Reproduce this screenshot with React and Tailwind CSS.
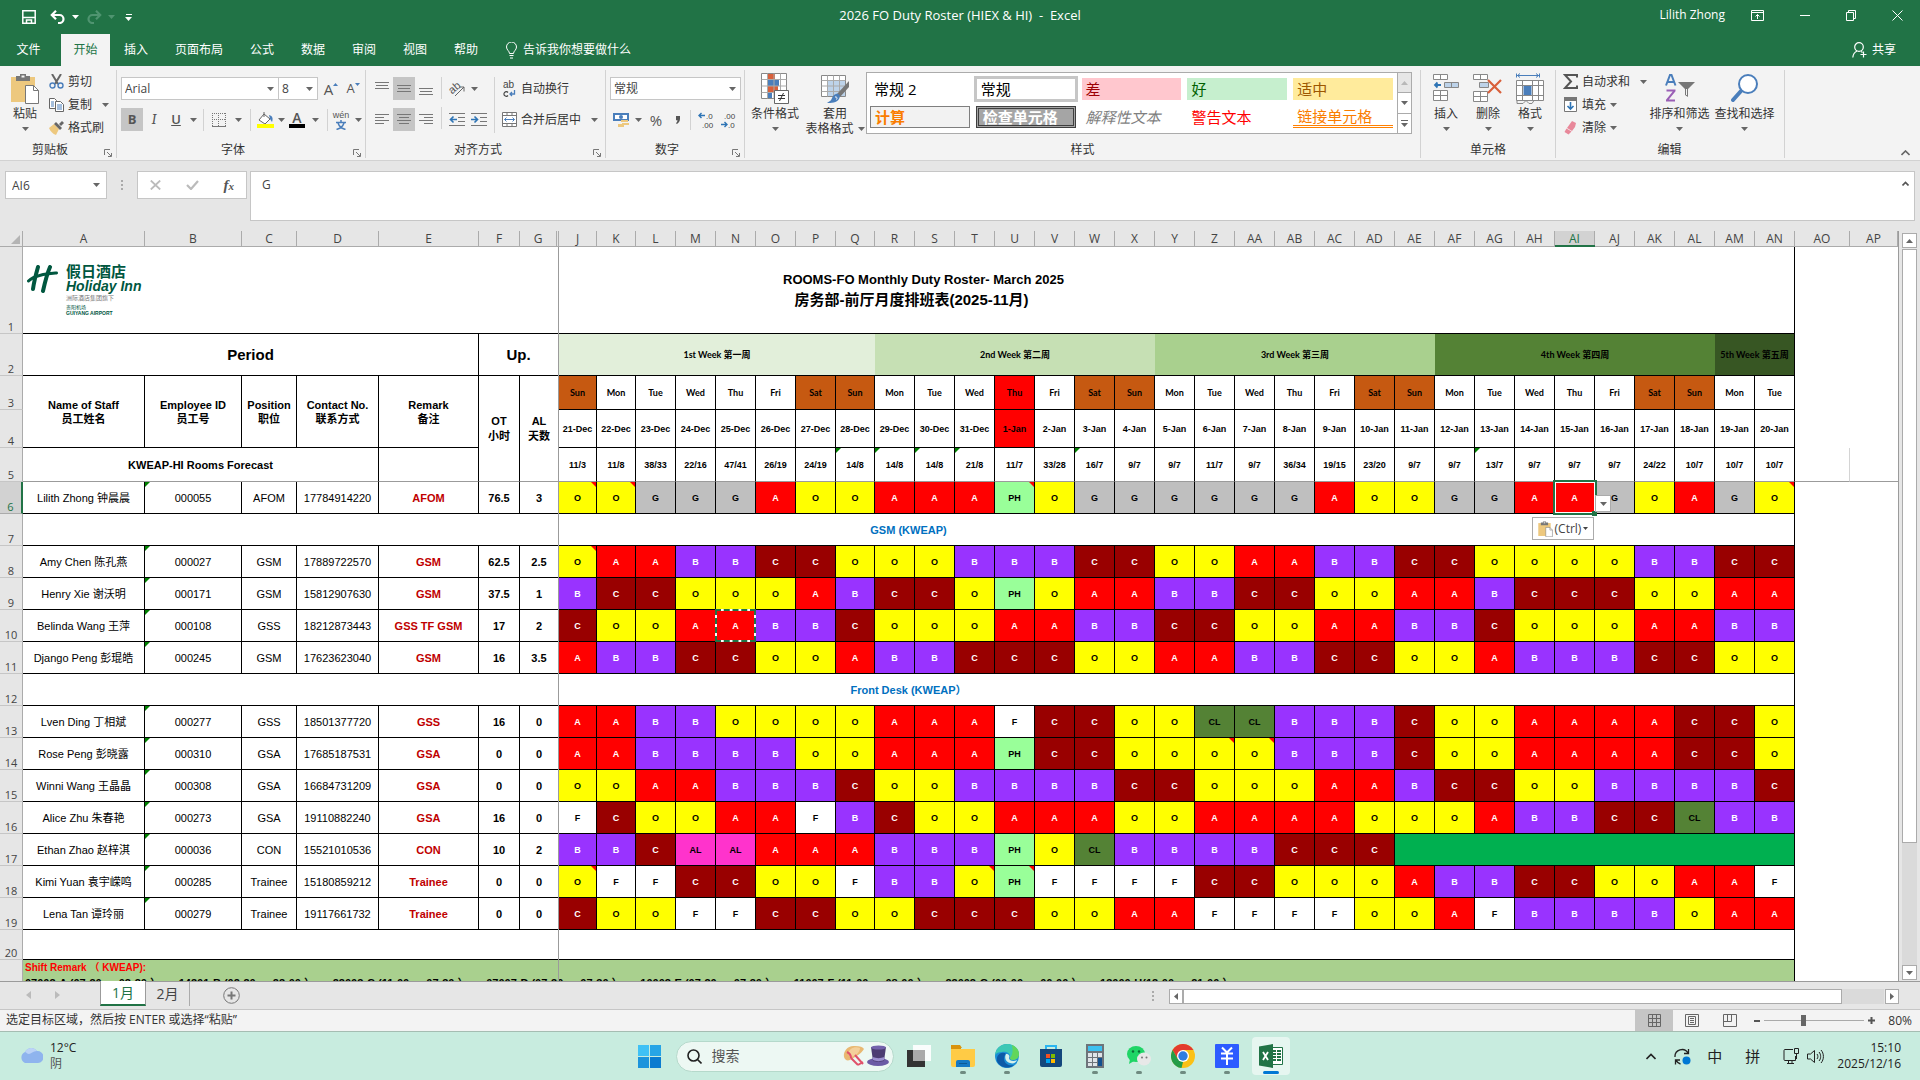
import React from 'react';

const WEEKS = [
  { label: '1st Week 第一周', span: 8, color: 'bg-[#e2efda]' },
  { label: '2nd Week 第二周', span: 7, color: 'bg-[#c6e0b4]' },
  { label: '3rd Week 第三周', span: 7, color: 'bg-[#a9d08e]' },
  { label: '4th Week 第四周', span: 7, color: 'bg-[#548235]' },
  { label: '5th Week 第五周', span: 2, color: 'bg-[#375623]' },
];

const DAY_NAMES = ['Sun', 'Mon', 'Tue', 'Wed', 'Thu', 'Fri', 'Sat'];

const DAYS = Array.from({ length: 31 }, (_, i) => ({
  name: DAY_NAMES[i % 7],
  date: i < 11 ? `${21 + i}-Dec` : `${i - 10}-Jan`,
  holiday: i === 11,
}));

const FORECAST =
  '11/3 11/8 38/33 22/16 47/41 26/19 24/19 14/8 14/8 14/8 21/8 11/7 33/28 16/7 9/7 9/7 11/7 9/7 36/34 19/15 23/20 9/7 9/7 13/7 9/7 9/7 9/7 24/22 10/7 10/7 10/7'.split(' ');
const FORECAST_FLAGS = [7, 8, 9, 10, 13, 23];

const SHIFT_STYLES = {
  A: 'bg-[#ff0000] text-white',
  B: 'bg-[#9933ff] text-white',
  C: 'bg-[#990000] text-white',
  O: 'bg-[#ffff00] text-black',
  G: 'bg-[#bfbfbf] text-black',
  F: 'bg-white text-black',
  PH: 'bg-[#99ff99] text-black',
  AL: 'bg-[#ff33cc] text-black',
  CL: 'bg-[#548235] text-black',
};

const ROWS = [
  { n: 6, name: 'Lilith Zhong 钟晨晨', id: '000055', pos: 'AFOM', tel: '17784914220', remark: 'AFOM', ot: '76.5', al: '3', notes: [0, 1, 11, 30], shifts: 'O O G G G A O O A A A PH O G G G G G G A O O G G A A G O A G O' },
  { n: 7, section: 'GSM (KWEAP)' },
  { n: 8, name: 'Amy Chen 陈孔燕', id: '000027', pos: 'GSM', tel: '17889722570', remark: 'GSM', ot: '62.5', al: '2.5', notes: [0], shifts: 'O A A B B C C O O O B B B C C O O A A B B C C O O O O B B C C' },
  { n: 9, name: 'Henry Xie 谢沃明', id: '000171', pos: 'GSM', tel: '15812907630', remark: 'GSM', ot: '37.5', al: '1', shifts: 'B C C O O O A B C C O PH O A A B B C C O O A A B C C C O O A A' },
  { n: 10, name: 'Belinda Wang 王萍', id: '000108', pos: 'GSS', tel: '18212873443', remark: 'GSS TF GSM', ot: '17', al: '2', shifts: 'C O O A A B B C O O O A A B B C C O O A A B B C O O O A A B B' },
  { n: 11, name: 'Django Peng 彭琨皓', id: '000245', pos: 'GSM', tel: '17623623040', remark: 'GSM', ot: '16', al: '3.5', shifts: 'A B B C C O O A B B C C C O O A A B B C C O O A B B B C C O O' },
  { n: 12, section: 'Front Desk (KWEAP）' },
  { n: 13, name: 'Lven Ding 丁相斌', id: '000277', pos: 'GSS', tel: '18501377720', remark: 'GSS', ot: '16', al: '0', shifts: 'A A B B O O O O A A A F C C O O CL CL B B B C O O A A A A C C O' },
  { n: 14, name: 'Rose Peng 彭晓露', id: '000310', pos: 'GSA', tel: '17685187531', remark: 'GSA', ot: '0', al: '0', notes: [16, 17], shifts: 'A A B B B B O O A A A PH C C O O O O B B B C O O A A A A C C O' },
  { n: 15, name: 'Winni Wang 王晶晶', id: '000308', pos: 'GSA', tel: '16684731209', remark: 'GSA', ot: '0', al: '0', shifts: 'O O A A B B B C O O B B B B C C O O O A A B C C O O B B B B C' },
  { n: 16, name: 'Alice Zhu 朱春艳', id: '000273', pos: 'GSA', tel: '19110882240', remark: 'GSA', ot: '16', al: '0', shifts: 'F C O O A A F B C O O A A A O O A A A A O O O A B B C C CL B B' },
  { n: 17, name: 'Ethan Zhao 赵梓淇', id: '000036', pos: 'CON', tel: '15521010536', remark: 'CON', ot: '10', al: '2', shifts: 'B B C AL AL A A A B B B PH O CL B B B B C C C', rest: 10 },
  { n: 18, name: 'Kimi Yuan 袁宇嵘鸣', id: '000285', pos: 'Trainee', tel: '15180859212', remark: 'Trainee', ot: '0', al: '0', notes: [0, 10, 11], shifts: 'O F F C C O O F B B O PH F F F F C C O O O A B B C C O O A A F' },
  { n: 19, name: 'Lena Tan 谭玲丽', id: '000279', pos: 'Trainee', tel: '19117661732', remark: 'Trainee', ot: '0', al: '0', shifts: 'C O O F F C C O O C C C O O A A F F F F O O A F B B B B O A A' },
];

const SHIFT_TIMES = [
  '07003-A (07:30 — 03:30 ）、',
  '14301-B (02:30 — 23:00 ）、',
  '23003-C (11:00 — 07:30 ）、',
  '07007-D (07:30 — 07:30 ）、',
  '10003-E (07:30 — 07:30 ）、',
  '11007-F (11:00 — 08:00 ）、',
  '23003-G (00:00 — 06:00 ）、',
  '13000-H(13:00 — 21:00 ）',
];

const COLUMNS = [
  ['A', 'w-[122px]'], ['B', 'w-[97px]'], ['C', 'w-[55px]'], ['D', 'w-[82px]'], ['E', 'w-[100px]'],
  ['F', 'w-[41px]'], ['G', 'w-[39px]'], ['J', 'w-[38px]'], ['K', 'w-[39px]'],
  ...['L', 'M', 'N', 'O', 'P'].map((c) => [c, 'w-[40px]']),
  ['Q', 'w-[39px]'],
  ...['R', 'S', 'T', 'U', 'V', 'W', 'X', 'Y', 'Z', 'AA', 'AB', 'AC', 'AD', 'AE', 'AF', 'AG', 'AH', 'AI', 'AJ', 'AK', 'AL', 'AM', 'AN'].map((c) => [c, 'w-[40px]']),
  ['AO', 'w-[55px]'], ['AP', ''],
];

const CELL = 'relative p-0 border-r border-b border-black text-center';

/* ---------- small shared pieces ---------- */

const Caret = ({ className = 'text-[#666]' }) => (
  <svg width="7" height="4" viewBox="0 0 7 4" className={`shrink-0 ${className}`}>
    <path d="M0 0h7L3.5 4z" fill="currentColor" />
  </svg>
);

const VLine = ({ className = 'h-[22px]' }) => <span className={`w-px shrink-0 bg-[#d2d2d2] ${className}`} />;

const IconButton = ({ label, active, className = 'w-[22px]', children }) => (
  <button
    type="button"
    aria-label={label}
    className={`h-[23px] shrink-0 flex items-center justify-center ${className} ${active ? 'bg-[#c5c5c5]' : ''}`}
  >
    {children}
  </button>
);

const CaretButton = ({ label, className = 'w-3' }) => (
  <button type="button" aria-label={label} className={`h-[23px] shrink-0 flex items-center justify-center ${className}`}>
    <Caret />
  </button>
);

const Combo = ({ label, value, className }) => (
  <span className={`relative h-[23px] flex items-center border border-[#c6c6c6] bg-white ${className}`}>
    <select aria-label={label} defaultValue={value} className="w-full h-full appearance-none bg-transparent pl-[3px] text-xs text-[#444] outline-none">
      <option>{value}</option>
    </select>
    <span className="pointer-events-none absolute right-1 flex"><Caret /></span>
  </span>
);

const Group = ({ title, launcher, className, children }) => (
  <section className={`flex flex-col border-r border-[#d2d2d2] h-[88px] ${className}`}>
    <div className="flex-1 min-h-0">{children}</div>
    <div className={`relative h-4 flex items-center justify-center leading-4 text-[#333] ${launcher ? 'pr-5' : ''}`}>
      {title}
      {launcher && (
        <button type="button" aria-label={`${title}设置`} className="absolute right-1 bottom-px">
          <svg width="8" height="8" viewBox="0 0 8 8" fill="none" stroke="#777">
            <path d="M.5 6V.5H6M3 3l4 4M7.5 4v3.500H4" />
          </svg>
        </button>
      )}
    </div>
  </section>
);

const BigButton = ({ icon, lines, inlineCaret, className }) => (
  <button type="button" className={`flex flex-col items-center shrink-0 whitespace-nowrap ${className}`}>
    <span className="h-[36px] flex items-center">{icon}</span>
    <span className="leading-[15px] h-[15px]">{lines[0]}</span>
    <span className="leading-[15px] h-[15px] flex items-center gap-1">
      {lines[1]}
      {(inlineCaret || !lines[1]) && <Caret />}
    </span>
  </button>
);

const Clipboard = ({ width, height }) => (
  <svg width={width} height={height} viewBox="0 0 28 31">
    <path d="M0 4h24v25H0z" fill="#edc87e" />
    <path d="M5 8V3h4V1h6v2h4v5z" fill="#777" />
    <path d="M10.500 2.500h3v2h-3z" fill="#f3f3f3" />
    <path d="M14.500 12.500h8l5 5v13h-13z" fill="#fff" stroke="#777" />
    <path d="M22.500 12.500v5h5" fill="none" stroke="#777" />
  </svg>
);

const Lines = ({ rows }) => (
  <svg width="14" height="13" viewBox="0 0 14 13" stroke="#777">
    {rows.map(([y, x, w]) => <path key={y} d={`M${x} ${y + 0.5}h${w}`} />)}
  </svg>
);

const Indent = ({ back }) => (
  <svg width="16" height="13" viewBox="0 0 16 13" fill="none">
    <path d="M0 .5h16M9 4.500h7M9 8.500h7M0 12.500h16" stroke="#777" />
    <path d={back ? 'M8 6.500H2M4.500 3.500l-3 3 3 3' : 'M0 6.500h6M3.500 3.500l3 3-3 3'} stroke="#2e74b5" strokeWidth="1.6" />
  </svg>
);

/* ---------- title bar and tabs ---------- */

const TitleBar = () => (
  <header className="bg-[#217346] text-white h-[34px] grid grid-cols-[1fr_auto_1fr] items-center shrink-0">
    <div className="flex items-center pl-[22px]">
      <button type="button" aria-label="保存">
        <svg width="14" height="14" viewBox="0 0 14 14" fill="none" stroke="#fff" strokeWidth="1.500">
          <path d="M.8.800h12.400v12.400H.8zM.8 7.500h12.400M4.500 13v-3h5v3" />
        </svg>
      </button>
      <button type="button" aria-label="撤消" className="ml-[14px] flex items-center gap-[6px]">
        <svg width="16" height="14" viewBox="0 0 16 14" fill="none" stroke="#fff" strokeWidth="2.200">
          <path d="M6 .8L1.800 5 6 9.200M2 5h7.500a4 4 0 0 1 0 8H8" />
        </svg>
        <Caret className="text-white" />
      </button>
      <button type="button" aria-label="恢复" className="ml-[7px] flex items-center gap-[6px]">
        <svg width="16" height="14" viewBox="0 0 16 14" fill="none" stroke="#4f9470" strokeWidth="2.200">
          <path d="M10 .8L14.200 5 10 9.200M14 5H6.500a4 4 0 0 0 0 8H8" />
        </svg>
        <Caret className="text-[#4f9470]" />
      </button>
      <button type="button" aria-label="自定义快速访问工具栏" className="ml-[10px] flex flex-col items-center gap-[2px]">
        <span className="w-[6px] h-px bg-white" />
        <Caret className="text-white" />
      </button>
    </div>
    <h1 className="text-[13px] leading-4 whitespace-pre pb-1">2026 FO Duty Roster (HIEX &amp; HI)  -  Excel</h1>
    <div className="flex items-center justify-end pb-1 pr-[17px]">
      <span className="text-xs mr-[26px]">Lilith Zhong</span>
      <button type="button" aria-label="功能区显示选项" className="mr-9">
        <svg width="13" height="11" viewBox="0 0 13 11" fill="none" stroke="#fff">
          <path d="M.5.500h12v10H.5zM.5 2.500h12M6.500 9V4.500M4.500 6.500l2-2 2 2" />
        </svg>
      </button>
      <button type="button" aria-label="最小化" className="mr-9">
        <svg width="10" height="11" viewBox="0 0 10 11" stroke="#fff"><path d="M0 5.500h10" /></svg>
      </button>
      <button type="button" aria-label="还原" className="mr-9">
        <svg width="10" height="11" viewBox="0 0 10 11" fill="none" stroke="#fff">
          <path d="M.5 2.500h7v8h-7zM2.500 2.500v-2h7v8h-2" />
        </svg>
      </button>
      <button type="button" aria-label="关闭">
        <svg width="11" height="11" viewBox="0 0 11 11" stroke="#fff"><path d="M.5.500l10 10M10.500.500l-10 10" /></svg>
      </button>
    </div>
  </header>
);

const TabBar = () => (
  <nav className="bg-[#217346] text-white h-8 flex items-stretch text-xs shrink-0">
    <button type="button" className="w-[61px] pr-1 shrink-0">文件</button>
    <button type="button" className="bg-[#f3f3f3] text-[#217346] w-[49px] shrink-0">开始</button>
    <div className="flex gap-px">
      {['插入', '页面布局', '公式', '数据', '审阅', '视图', '帮助'].map((tab) => (
        <button key={tab} type="button" className="pl-[14px] pr-3 whitespace-nowrap">{tab}</button>
      ))}
    </div>
    <button type="button" className="flex items-center gap-[6px] ml-4 whitespace-nowrap">
      <svg width="11" height="17" viewBox="0 0 11 17" fill="none" stroke="#fff">
        <path d="M3.500 11.500c0-2.500-3-3.500-3-6.500a5 5 0 0 1 10 0c0 3-3 4-3 6.500zM3.500 13.500h4M4 16h3" />
      </svg>
      告诉我你想要做什么
    </button>
    <button type="button" className="flex items-center gap-[5px] ml-auto pr-6">
      <svg width="15" height="16" viewBox="0 0 15 16" fill="none" stroke="#fff" strokeWidth="1.200">
        <circle cx="7" cy="5" r="4.300" />
        <path d="M.8 15.500c.3-3.500 2-5.500 4.200-6.500M9 9.500l1.500 1M11.500 9.500v6M8.500 12.500h6" />
      </svg>
      共享
    </button>
  </nav>
);

/* ---------- ribbon ---------- */

const ClipboardGroup = () => (
  <Group title="剪贴板" launcher className="w-[117px] pl-1">
    <div className="flex">
      <BigButton className="w-[42px]" icon={<Clipboard width={28} height={31} />} lines={['粘贴']} />
      <div className="flex flex-col pl-[3px]">
        <button type="button" className="h-[23px] flex items-center gap-1">
          <svg width="15" height="15" viewBox="0 0 15 15" fill="none">
            <path d="M3 0l6 10M12 0L6 10" stroke="#666" strokeWidth="2" />
            <circle cx="3.500" cy="11.500" r="2.500" stroke="#4a7ebb" strokeWidth="1.400" />
            <circle cx="11.500" cy="11.500" r="2.500" stroke="#4a7ebb" strokeWidth="1.400" />
          </svg>
          剪切
        </button>
        <button type="button" className="h-[23px] flex items-center gap-1">
          <svg width="15" height="14" viewBox="0 0 15 14" fill="#fff" stroke="#666">
            <path d="M.5.500h5l2 2v8h-7z" />
            <path d="M2 4h3M2 6h3M2 8h3" stroke="#4a7ebb" />
            <path d="M6.500 3.500h5l3 3v7h-8z" />
            <path d="M8 7h5M8 9h5M8 11h5" stroke="#4a7ebb" />
          </svg>
          复制
          <span className="pl-[6px]"><Caret /></span>
        </button>
        <button type="button" className="h-[23px] flex items-center gap-1">
          <svg width="15" height="14" viewBox="0 0 15 14">
            <path d="M0 7l5-4 5 5-3 6c-3-1-6-4-7-7z" fill="#edc87e" />
            <path d="M5 3l2-2 6 6-2 2z" fill="#666" />
            <path d="M10 3l3-3 2 2-3 3z" fill="#666" />
          </svg>
          格式刷
        </button>
      </div>
    </div>
  </Group>
);

const FontGroup = () => (
  <Group title="字体" launcher className="w-[249px] pl-1">
    <div className="flex flex-col gap-2 pt-[7px]">
      <div className="flex items-center">
        <Combo label="字体" value="Arial" className="w-[158px]" />
        <Combo label="字号" value="8" className="w-[40px] -ml-px" />
        <IconButton label="增大字号" className="w-[22px] ml-[2px] text-[15px] text-[#555]">
          A<svg width="5" height="14" viewBox="0 0 5 14"><path d="M0 4l2.500-3L5 4z" fill="#4a7ebb" /></svg>
        </IconButton>
        <IconButton label="减小字号" className="w-[22px] text-[13px] text-[#555]">
          A<svg width="5" height="14" viewBox="0 0 5 14"><path d="M0 1l2.500 3L5 1z" fill="#4a7ebb" /></svg>
        </IconButton>
      </div>
      <div className="flex items-center">
        <IconButton label="加粗" active><b className="text-[13px] text-[#555]">B</b></IconButton>
        <IconButton label="倾斜"><i className="font-serif text-[15px] text-[#555]">I</i></IconButton>
        <IconButton label="下划线"><u className="text-[13px] font-semibold text-[#555]">U</u></IconButton>
        <CaretButton label="下划线样式" />
        <VLine className="h-[22px] mx-1" />
        <IconButton label="边框" className="w-[22px]">
          <svg width="14" height="14" viewBox="0 0 14 14" fill="none" stroke="#777">
            <path d="M.5 0v13M6.500 0v13M13.500 0v13M0 .5h14M0 6.500h14" strokeDasharray="1 1" />
            <path d="M0 13.500h14" />
          </svg>
        </IconButton>
        <CaretButton label="边框选项" className="w-4" />
        <VLine className="h-[22px] mx-1" />
        <IconButton label="填充颜色" className="w-[20px]">
          <svg width="17" height="17" viewBox="0 0 17 17" fill="none">
            <path d="M7 3l6 5-5 5-6-4z" fill="#fff" stroke="#666" />
            <path d="M7 6V1" stroke="#666" />
            <path d="M12 4c4 1 4 4 3 7l-2-3z" fill="#4a7ebb" />
            <path d="M0 13h17v4H0z" fill="#ff0" />
          </svg>
        </IconButton>
        <CaretButton label="填充颜色选项" />
        <IconButton label="字体颜色" className="w-[20px]">
          <span className="flex flex-col items-center">
            <span className="text-[14px] leading-[13px] font-semibold text-[#555]">A</span>
            <span className="w-4 h-1 bg-black" />
          </span>
        </IconButton>
        <CaretButton label="字体颜色选项" className="w-4" />
        <VLine className="h-[22px] mx-1" />
        <IconButton label="拼音" className="w-[18px]">
          <span className="flex flex-col items-center text-[#555]">
            <span className="text-[9px] leading-[10px] font-['Liberation_Sans',sans-serif]">wén</span>
            <svg width="10" height="10" viewBox="0 0 10 10" fill="none" stroke="#4a7ebb" strokeWidth="1.500">
              <path d="M5 0v2M0 2.500h10M2 3c1 3 4 5.500 7.500 6.500M8 3C7 6 4 8.500.5 9.500" />
            </svg>
          </span>
        </IconButton>
        <CaretButton label="拼音选项" className="w-4" />
      </div>
    </div>
  </Group>
);

const AlignGroup = () => (
  <Group title="对齐方式" launcher className="w-[240px] pl-[5px]">
    <div className="flex pt-[7px]">
      <div className="flex flex-col gap-2">
        <div className="flex">
          <IconButton label="顶端对齐"><Lines rows={[[0, 0, 14], [3, 1, 12], [6, 0, 14]]} /></IconButton>
          <IconButton label="垂直居中" active><Lines rows={[[3, 0, 14], [6, 1, 12], [9, 0, 14]]} /></IconButton>
          <IconButton label="底端对齐"><Lines rows={[[6, 0, 14], [9, 1, 12], [12, 0, 14]]} /></IconButton>
        </div>
        <div className="flex">
          <IconButton label="左对齐"><Lines rows={[[1, 0, 14], [4, 0, 9], [7, 0, 14], [10, 0, 9]]} /></IconButton>
          <IconButton label="居中" active><Lines rows={[[1, 0, 14], [4, 2, 10], [7, 0, 14], [10, 2, 10]]} /></IconButton>
          <IconButton label="右对齐"><Lines rows={[[1, 0, 14], [4, 5, 9], [7, 0, 14], [10, 5, 9]]} /></IconButton>
        </div>
      </div>
      <div className="flex flex-col gap-2 px-1">
        <VLine /><VLine />
      </div>
      <div className="flex flex-col gap-2 w-[48px]">
        <div className="flex">
          <IconButton label="方向">
            <svg width="17" height="15" viewBox="0 0 17 15" fill="none" stroke="#666" className="overflow-visible font-['Liberation_Sans',sans-serif]">
              <path d="M6 15l9-9M10.500 6h4.500v4.500" />
              <text x="0" y="11" fontSize="11" fill="#555" stroke="none" transform="rotate(-40 5 8)">ab</text>
            </svg>
          </IconButton>
          <CaretButton label="方向选项" />
        </div>
        <div className="flex">
          <IconButton label="减少缩进量"><Indent back /></IconButton>
          <IconButton label="增加缩进量"><Indent /></IconButton>
        </div>
      </div>
      <VLine className="h-[56px]" />
      <div className="flex flex-col gap-2 pl-[7px]">
        <button type="button" className="h-[23px] flex items-center gap-1">
          <svg width="15" height="18" viewBox="0 0 15 18" className="overflow-visible font-['Liberation_Sans',sans-serif]">
            <text x="1" y="8" fontSize="10" fill="#444">ab</text>
            <path d="M6 12.500a2.300 2.300 0 1 0 0 3" fill="none" stroke="#444" strokeWidth="1.200" />
            <path d="M12.500 10v4H8M10 12l-2 2 2 2" fill="none" stroke="#4a7ebb" strokeWidth="1.300" />
          </svg>
          自动换行
        </button>
        <button type="button" className="h-[23px] flex items-center gap-1">
          <svg width="15" height="15" viewBox="0 0 15 15" fill="#fff" stroke="#777">
            <path d="M.5.500h14v14H.5zM.5 3.500h14M.5 11.500h14M5 .5v3M10 .5v3M5 11.500v3M10 11.500v3" />
            <path d="M2.500 7.500h10M4.500 5.500l-2 2 2 2M10.500 5.500l2 2-2 2" fill="none" stroke="#4a7ebb" />
          </svg>
          合并后居中
          <span className="pl-[6px]"><Caret /></span>
        </button>
      </div>
    </div>
  </Group>
);

const NumberGroup = () => (
  <Group title="数字" launcher className="w-[139px] pl-1">
    <div className="flex flex-col gap-2 pt-[7px]">
      <Combo label="数字格式" value="常规" className="w-[131px]" />
      <div className="flex items-center">
        <IconButton label="会计数字格式">
          <svg width="16" height="16" viewBox="0 0 16 16">
            <path d="M0 1h16v8H0z" fill="#4a7ebb" />
            <path d="M2 3h12v4H2z" fill="#fff" />
            <circle cx="8" cy="5" r="2" fill="#4a7ebb" />
            <path d="M8 8h7v2H8zM9 11h7v2H9zM5 12h6v3H5z" fill="#edc87e" />
          </svg>
        </IconButton>
        <CaretButton label="会计格式选项" />
        <IconButton label="百分比样式" className="w-6 text-[15px] text-[#555]">%</IconButton>
        <IconButton label="千位分隔样式" className="w-[18px]">
          <svg width="5" height="8" viewBox="0 0 5 8"><path d="M1 0h4v3c0 2-1.500 4-3 5l-1-.8c1-1 1.500-2 1.500-3H1z" fill="#555" /></svg>
        </IconButton>
        <VLine className="h-[20px] mx-1" />
        <IconButton label="增加小数位数">
          <svg width="16" height="18" viewBox="0 0 16 18" fontSize="8" fill="#444" className="font-['Liberation_Sans',sans-serif] overflow-visible">
            <path d="M7 4.500H1.500M3.500 2l-2.500 2.500L3.500 7" fill="none" stroke="#2e74b5" strokeWidth="1.400" />
            <text x="8" y="8">.0</text><text x="4" y="17">.00</text>
          </svg>
        </IconButton>
        <IconButton label="减少小数位数">
          <svg width="16" height="18" viewBox="0 0 16 18" fontSize="8" fill="#444" className="font-['Liberation_Sans',sans-serif] overflow-visible">
            <text x="4" y="8">.00</text><text x="8" y="17">.0</text>
            <path d="M1 13.500h5.500M4.500 11l2.500 2.500L4.500 16" fill="none" stroke="#2e74b5" strokeWidth="1.400" />
          </svg>
        </IconButton>
      </div>
    </div>
  </Group>
);

const ConditionalIcon = () => (
  <svg width="30" height="31" viewBox="0 0 30 31" fill="none" stroke="#888">
    <path d="M1.500.500h25v25h-25z" fill="#fff" />
    <path d="M8 1h7v6H8zM8 13h10v6H8z" fill="#d9603b" stroke="none" />
    <path d="M8 7h11v6H8zM8 19h4v6H8z" fill="#4a7ebb" stroke="none" />
    <path d="M1.500 6.500h25M1.500 13h25M1.500 19.500h25M7.500.500v25M14 .5v25M20.500.500v25" stroke="#aaa" />
    <path d="M14.500 17.500h14v13h-14z" fill="#fff" stroke="#666" />
    <path d="M18 22.500h7M18 25.500h7M23.500 20l-4 8" stroke="#333" />
  </svg>
);

const TableFormatIcon = () => (
  <svg width="30" height="31" viewBox="0 0 30 31" fill="none">
    <path d="M1.500 2.500h24v21h-24z" fill="#fff" stroke="#888" />
    <path d="M7 8h18v15H7z" fill="#bdd3ea" />
    <path d="M1.500 7.500h24M1.500 13h24M1.500 18.500h24M7.500 2.500v21M13.500 2.500v21M19.500 2.500v21" stroke="#aaa" />
    <path d="M29 8v6L20 24l-3-3z" fill="#777" />
    <path d="M16 21c3-1 5 2 3 5-2 4-8 4-12 4 3-2 4-2 5-5 1-2 2-3.500 4-4z" fill="#4a7ebb" />
    <path d="M15 24c2-.5 2.500 1 1.500 2.500" stroke="#fff" />
  </svg>
);

const STYLE_CHIPS = [
  ['常规 2', 'text-black whitespace-pre'],
  ['常规', 'text-black bg-white border border-[#c6c6c6] outline-2 outline-[#c6c6c6]'],
  ['差', 'bg-[#ffc7ce] text-[#9c0006]'],
  ['好', 'bg-[#c6efce] text-[#006100]'],
  ['适中', 'bg-[#ffeb9c] text-[#9c5700]'],
  ['计算', 'bg-[#f2f2f2] text-[#fa7d00] font-bold border border-[#7f7f7f]'],
  ['检查单元格', 'bg-[#a5a5a5] text-white font-bold border-[3px] border-double border-[#3f3f3f]'],
  ['解释性文本', 'text-[#7f7f7f] italic'],
  ['警告文本', 'text-[#ff0000]'],
  ['链接单元格', 'text-[#fa7d00] border-b-[3px] border-double border-[#ff8001]'],
];

const StylesGroup = () => (
  <Group title="样式" className="flex-1 min-w-[675px]">
    <div className="flex">
      <BigButton className="w-[60px]" icon={<ConditionalIcon />} lines={['条件格式']} />
      <BigButton className="w-[60px]" icon={<TableFormatIcon />} lines={['套用', '表格格式']} inlineCaret />
      <div className="flex-1 ml-px mt-[2px] mr-2 h-[62px] flex border border-[#ababab] bg-white">
        <div className="flex-1 grid grid-cols-5 gap-x-[6px] gap-y-[6px] pl-[3px] pr-1 py-[5px] text-[15px] leading-4">
          {STYLE_CHIPS.map(([text, style]) => (
            <button key={text} type="button" className={`h-[22px] px-1 flex items-center text-left whitespace-nowrap ${style}`}>{text}</button>
          ))}
        </div>
        <div className="w-[14px] flex flex-col border-l border-[#ababab]">
          <button type="button" aria-label="上一行" className="flex-1 flex items-center justify-center bg-[#e6e6e6]">
            <Caret className="text-[#b8b8b8] rotate-180" />
          </button>
          <button type="button" aria-label="下一行" className="flex-1 flex items-center justify-center border-y border-[#ababab]"><Caret /></button>
          <button type="button" aria-label="其他样式" className="flex-1 flex flex-col items-center justify-center gap-[2px]">
            <span className="w-[7px] h-px bg-[#666]" />
            <Caret />
          </button>
        </div>
      </div>
    </div>
  </Group>
);

const InsertIcon = () => (
  <svg width="28" height="28" viewBox="0 0 28 28" fill="#fff" stroke="#888">
    <path d="M1.500.500h14v5h-14zM8.500.500v5M1.500 16.500h14v10h-14zM8.500 16.500v10M1.500 21.500h14" />
    <path d="M12.500 8.500h14v5h-14zM19.500 8.500v5" fill="#bdd3ea" />
    <path d="M9 11H3M5.500 8.500L3 11l2.500 2.500" fill="none" stroke="#2e74b5" strokeWidth="1.800" />
  </svg>
);

const DeleteIcon = () => (
  <svg width="30" height="28" viewBox="0 0 30 28" fill="#fff" stroke="#888">
    <path d="M.5.500h14v5h-14zM7.500.500v5M.5 17.500h14v10h-14zM7.500 17.500v10M.5 22.500h14" />
    <path d="M6.500 8.500h9v5h-9z" fill="#bdd3ea" />
    <path d="M15 6l13 13M28 6L15 19" fill="none" stroke="#d9603b" strokeWidth="2.200" />
  </svg>
);

const FormatIcon = () => (
  <svg width="28" height="31" viewBox="0 0 28 31" fill="none" stroke="#888">
    <path d="M.5.500v4M23.500.500v4M1 2.500h22M4 .5l-2.500 2L4 4.500M20 .5l2.500 2-2.500 2" stroke="#4a7ebb" />
    <path d="M.5 7.500h27v20H.5z" fill="#fff" />
    <path d="M7.500 12.500h8v10h-8z" fill="#4a7ebb" stroke="none" />
    <path d="M.5 12.500h27M.5 22.500h27M6.500 7.500v20M16.500 7.500v20M22.500 7.500v20" />
    <path d="M1 27.500v3h6l3-3 3 3h3l2-3" />
  </svg>
);

const CellsGroup = () => (
  <Group title="单元格" className="w-[135px]">
    <div className="flex pl-1">
      <BigButton className="w-[42px]" icon={<InsertIcon />} lines={['插入']} />
      <BigButton className="w-[42px]" icon={<DeleteIcon />} lines={['删除']} />
      <BigButton className="w-[42px]" icon={<FormatIcon />} lines={['格式']} />
    </div>
  </Group>
);

const SortIcon = () => (
  <svg width="30" height="30" viewBox="0 0 30 30" fill="none">
    <path d="M1 12.500L5 2h1.500l4 10.500M2.500 9h6.500" stroke="#4a7ebb" strokeWidth="2" />
    <path d="M1.500 17.500h8v.5l-7.500 9v.5h8" stroke="#9a5fb5" strokeWidth="2" />
    <path d="M13 9h17l-7 7v8l-3-2v-6z" fill="#777" />
    <path d="M21 16h1v6h-1z" fill="#f3f3f3" />
  </svg>
);

const FindIcon = () => (
  <svg width="28" height="28" viewBox="0 0 28 28" fill="none">
    <path d="M10 17L2 26" stroke="#4a7ebb" strokeWidth="4" strokeLinecap="round" />
    <circle cx="17" cy="10" r="9" fill="#fff" stroke="#4a7ebb" strokeWidth="2" />
  </svg>
);

const EditingGroup = () => (
  <Group title="编辑" className="w-[229px] pl-[7px] pr-2">
    <div className="flex">
      <div className="w-[87px]">
        <button type="button" className="h-[23px] flex items-center gap-1 whitespace-nowrap">
          <svg width="15" height="15" viewBox="0 0 15 15" fill="none" stroke="#555" strokeWidth="2">
            <path d="M14 3.500V1H2l6 6.500L2 14h12v-2.500" />
          </svg>
          自动求和
          <span className="pl-[6px]"><Caret /></span>
        </button>
        <button type="button" className="h-[23px] flex items-center gap-1">
          <svg width="15" height="15" viewBox="0 0 15 15" fill="none">
            <path d="M1.500.500h12v14h-12z" fill="#fff" stroke="#777" />
            <path d="M1 0h13v4H1z" fill="#777" />
            <path d="M7.500 5v7M4.500 9l3 3 3-3" stroke="#2e74b5" strokeWidth="1.600" />
          </svg>
          填充 <Caret />
        </button>
        <button type="button" className="h-[23px] flex items-center gap-1">
          <svg width="15" height="14" viewBox="0 0 15 14">
            <path d="M9 0l4 2-1 4-3 4-5-3z" fill="#e8889a" />
            <path d="M3.500 7.500l5 3-3 3-4-2.500z" fill="#e8889a" />
          </svg>
          清除 <Caret />
        </button>
      </div>
      <BigButton className="w-[65px]" icon={<SortIcon />} lines={['排序和筛选']} />
      <BigButton className="w-[65px]" icon={<FindIcon />} lines={['查找和选择']} />
    </div>
  </Group>
);

const Ribbon = () => (
  <div className="bg-[#f3f3f3] text-[#333] text-xs h-[95px] pt-1 flex border-b border-[#d2d2d2] shrink-0">
    <ClipboardGroup />
    <FontGroup />
    <AlignGroup />
    <NumberGroup />
    <StylesGroup />
    <CellsGroup />
    <EditingGroup />
    <div className="w-[135px] shrink-0 flex items-end justify-end pb-1 pr-[10px]">
      <button type="button" aria-label="折叠功能区">
        <svg width="9" height="6" viewBox="0 0 9 6" fill="none" stroke="#666" strokeWidth="1.600"><path d="M.5 5l4-4 4 4" /></svg>
      </button>
    </div>
  </div>
);

/* ---------- formula bar ---------- */

const FormulaBar = () => (
  <div className="bg-[#e6e6e6] h-[70px] pt-[10px] px-[5px] flex items-start text-xs text-[#444] shrink-0">
    <div className="relative w-[102px] h-[28px] bg-white border border-[#c6c6c6] flex items-center">
      <input aria-label="名称框" defaultValue="AI6" className="w-full h-full pl-[6px] bg-transparent outline-none" />
      <span className="absolute right-[6px] flex"><Caret /></span>
    </div>
    <svg width="2" height="11" viewBox="0 0 2 11" className="mt-[9px] mx-[14px]" fill="#aaa">
      <path d="M0 0h2v2H0zM0 4h2v2H0zM0 8h2v2H0z" />
    </svg>
    <div className="w-[110px] h-[28px] bg-white border border-[#c6c6c6] flex items-center justify-between px-3">
      <button type="button" aria-label="取消">
        <svg width="11" height="10" viewBox="0 0 11 10" stroke="#bbb" strokeWidth="1.800"><path d="M.8.500l9.400 9M10.200.500l-9.400 9" /></svg>
      </button>
      <button type="button" aria-label="输入">
        <svg width="13" height="10" viewBox="0 0 13 10" fill="none" stroke="#bbb" strokeWidth="2.200"><path d="M1 5l4 4 7-8" /></svg>
      </button>
      <button type="button" aria-label="插入函数" className="font-['Liberation_Serif',serif] italic font-bold text-[15px] leading-4 text-[#555]">
        f<span className="text-[11px]">x</span>
      </button>
    </div>
    <div className="relative flex-1 ml-[3px] h-[50px] bg-white border border-[#c6c6c6]">
      <textarea aria-label="编辑栏" defaultValue="G" className="block w-full h-full resize-none pl-[11px] pt-[5px] leading-4 outline-none bg-transparent" />
      <button type="button" aria-label="展开编辑栏" className="absolute right-[5px] top-[9px]">
        <svg width="7" height="5" viewBox="0 0 7 5" fill="none" stroke="#555" strokeWidth="1.600"><path d="M.5 4.500l3-3 3 3" /></svg>
      </button>
    </div>
  </div>
);

/* ---------- worksheet ---------- */

const Gutter = ({ n, selected }) => (
  <th
    scope="row"
    className={`p-0 border-b border-r align-bottom font-normal text-[11px] leading-[12px] font-['Open_Sans',sans-serif] ${
      selected ? 'bg-[#d2d2d2] text-[#217346] border-b-[#ababab] border-r-2 border-r-[#217346]' : 'bg-[#e6e6e6] text-[#444] border-b-[#c6c6c6] border-r-[#ababab]'
    }`}
  >
    {n}
  </th>
);

const Flag = () => <span className="absolute left-0 top-0 size-[5px] bg-[#008000] [clip-path:polygon(0_0,100%_0,0_100%)]" />;
const Note = () => <span className="absolute right-0 top-0 size-[5px] bg-[#ff0000] [clip-path:polygon(0_0,100%_0,100%_100%)]" />;

const HolidayInnLogo = () => (
  <div className="flex gap-2 pl-1 pt-[17px] w-[120px] h-[86px] text-left text-[#00573f] whitespace-nowrap">
    <svg width="31" height="28" viewBox="0 0 31 28" fill="none" stroke="#00573f" strokeLinecap="round" className="shrink-0 mt-px">
      <path d="M11 2C9 9 7 17 6 24" strokeWidth="4" />
      <path d="M23 2c-3 7-5 15-7 24" strokeWidth="4" />
      <path d="M1.500 16c6-6 18-7 28-8" strokeWidth="3" />
    </svg>
    <div>
      <p className="text-[15px] leading-[15px] font-bold">假日酒店</p>
      <p className="text-[14px] leading-[14px] font-bold italic">Holiday Inn</p>
      <p className="text-[6px] leading-[10px] text-[#777]">洲际酒店集团旗下</p>
      <p className="text-[5px] leading-[8px]">贵阳机场</p>
      <p className="text-[5px] leading-[5px] font-bold">GUIYANG AIRPORT</p>
    </div>
  </div>
);

const SelectedCell = () => (
  <>
    <span className="absolute -top-[2px] -left-[2px] -right-[3px] -bottom-[2px] z-10 border-2 border-[#217346]">
      <span className="block w-full h-full border border-white" />
    </span>
    <span className="absolute -right-[3px] -bottom-[3px] z-20 size-[5px] bg-[#217346]" />
    <button type="button" aria-label="选择班次" className="absolute left-full top-[13px] z-20 w-4 h-[17px] ml-px flex items-center justify-center border border-[#ababab] bg-white">
      <Caret />
    </button>
    <button type="button" className="absolute -left-[23px] top-[35px] z-20 w-[62px] h-[23px] flex items-center justify-center gap-[2px] border border-[#ababab] bg-white font-normal text-xs text-[#444] font-['Open_Sans',sans-serif]">
      <Clipboard width={15} height={16} />
      (Ctrl)
      <svg width="5" height="3" viewBox="0 0 5 3"><path d="M0 0h5L2.500 3z" fill="#444" /></svg>
    </button>
  </>
);

const CopiedBorder = () => (
  <span className="absolute -inset-px z-10 border-2 border-white">
    <span className="absolute -inset-[2px] border-2 border-dashed border-[#217346]" />
  </span>
);

const Outside = ({ freeze }) => (
  <>
    <td className={`bg-white ${freeze ? 'border-b border-r border-b-[#9b9b9b] border-r-[#d4d4d4]' : ''}`} />
    <td className={`bg-white ${freeze ? 'border-b border-b-[#9b9b9b]' : ''}`} />
  </>
);

const StaffRow = ({ row }) => {
  const shifts = row.shifts.split(' ');
  return (
    <tr className="h-[32px]">
      <Gutter n={row.n} selected={row.n === 6} />
      <td className={`${CELL} whitespace-nowrap`}>{row.name}</td>
      <td className={CELL}><Flag />{row.id}</td>
      <td className={CELL}>{row.pos}</td>
      <td className={CELL}>{row.tel}</td>
      <td className={`${CELL} font-bold text-[#c00000]`}>{row.remark}</td>
      <td className={`${CELL} font-bold`}>{row.ot}</td>
      <td className={`${CELL} font-bold`}>{row.al}</td>
      {shifts.map((shift, i) => (
        <td key={i} className={`${CELL} text-[9px] font-bold ${SHIFT_STYLES[shift]}`}>
          {shift}
          {row.notes?.includes(i) && <Note />}
          {row.n === 6 && i === 25 && <SelectedCell />}
          {row.n === 10 && i === 4 && <CopiedBorder />}
        </td>
      ))}
      {row.rest && <td colSpan={row.rest} className={`${CELL} bg-[#00b050]`} />}
      <Outside />
    </tr>
  );
};

const HeadCell = ({ en, cn, ...props }) => (
  <th {...props} className={`${CELL} font-bold leading-[14px]`}>{en}<br />{cn}</th>
);

const dayColor = (day) => {
  if (day.holiday) return 'bg-[#ff0000]';
  return day.name === 'Sat' || day.name === 'Sun' ? 'bg-[#c65911]' : '';
};

const Worksheet = () => (
  <main className="flex flex-1 min-h-0 bg-[#e6e6e6]">
    <div className="relative flex-1 min-w-0 overflow-hidden bg-white border-r border-[#9b9b9b]">
      <table className="w-full table-fixed border-separate border-spacing-0 text-[11px] leading-[14px] text-black font-['Liberation_Sans','Noto_Sans_CJK_SC',sans-serif]">
        <colgroup>
          <col className="w-[23px]" />
          {COLUMNS.map(([name, width]) => <col key={name} className={width} />)}
        </colgroup>
        <thead className="font-['Open_Sans',sans-serif]">
          <tr className="h-4">
            <td className="p-0 bg-[#e6e6e6] border-r border-b border-[#ababab] align-bottom">
              <svg width="9" height="9" viewBox="0 0 9 9" className="ml-[11px] mb-[2px]"><path d="M9 0v9H0z" fill="#b4b4b4" /></svg>
            </td>
            {COLUMNS.map(([name]) => (
              <th
                key={name}
                scope="col"
                className={`relative p-0 font-normal text-xs leading-[14px] h-4 border-r border-b border-[#ababab] ${
                  name === 'AI' ? 'bg-[#d2d2d2] text-[#217346]' : 'bg-[#e6e6e6] text-[#444]'
                } ${name === 'G' ? 'border-r-[3px] border-double' : ''}`}
              >
                {name}
                {name === 'AI' && <span className="absolute left-0 -right-px -bottom-px h-[2px] bg-[#217346]" />}
              </th>
            ))}
          </tr>
        </thead>
        <tbody>
          <tr className="h-[87px]">
            <Gutter n={1} />
            <td colSpan={38} className={CELL}>
              <div className="flex items-start">
                <HolidayInnLogo />
                <div className="flex-1 pt-[23px] font-bold">
                  <p className="text-[13px] leading-5">ROOMS-FO Monthly Duty Roster- March 2025</p>
                  <p className="text-[15px] leading-5 pr-6">房务部-前厅月度排班表(2025-11月)</p>
                </div>
                <div className="w-[90px]" />
              </div>
            </td>
            <Outside />
          </tr>
          <tr className="h-[42px]">
            <Gutter n={2} />
            <th colSpan={5} className={`${CELL} text-[15px] font-bold`}>Period</th>
            <th colSpan={2} className={`${CELL} text-[15px] font-bold`}>Up.</th>
            {WEEKS.map((week, i) => (
              <th key={week.label} colSpan={week.span} className={`relative p-0 border-b border-black text-[9px] font-bold whitespace-nowrap font-['Lato','Noto_Sans_CJK_SC',sans-serif] ${week.color} ${i === 4 ? 'border-r' : ''}`}>
                {week.label}
              </th>
            ))}
            <Outside />
          </tr>
          <tr className="h-[34px]">
            <Gutter n={3} />
            <HeadCell rowSpan={2} en="Name of Staff" cn="员工姓名" />
            <HeadCell rowSpan={2} en="Employee ID" cn="员工号" />
            <HeadCell rowSpan={2} en="Position" cn="职位" />
            <HeadCell rowSpan={2} en="Contact No." cn="联系方式" />
            <HeadCell rowSpan={2} en="Remark" cn="备注" />
            <th rowSpan={3} className={`${CELL} border-b-[#9b9b9b] font-bold leading-[15px]`}>OT<br />小时</th>
            <th rowSpan={3} className={`${CELL} border-b-[#9b9b9b] font-bold leading-[15px]`}>AL<br />天数</th>
            {DAYS.map((day) => (
              <th key={day.date} className={`${CELL} text-[9px] font-bold font-['Lato',sans-serif] ${dayColor(day)}`}>{day.name}</th>
            ))}
            <Outside />
          </tr>
          <tr className="h-[38px]">
            <Gutter n={4} />
            {DAYS.map((day) => (
              <th key={day.date} className={`${CELL} text-[9px] font-bold whitespace-nowrap ${day.holiday ? 'bg-[#ff0000]' : ''}`}>{day.date}</th>
            ))}
            <Outside />
          </tr>
          <tr className="h-[34px]">
            <Gutter n={5} />
            <td colSpan={4} className={`${CELL} border-b-[#9b9b9b] font-bold`}>KWEAP-HI Rooms Forecast</td>
            <td className={`${CELL} border-b-[#9b9b9b]`} />
            {FORECAST.map((value, i) => (
              <td key={i} className={`${CELL} border-b-[#9b9b9b] text-[9px] font-bold`}>
                {FORECAST_FLAGS.includes(i) && <Flag />}
                {value}
              </td>
            ))}
            <Outside freeze />
          </tr>
          {ROWS.map((row) =>
            row.section ? (
              <tr key={row.n} className="h-[32px]">
                <Gutter n={row.n} />
                <td colSpan={38} className={`${CELL} font-bold text-[#0070c0]`}>{row.section}</td>
                <Outside />
              </tr>
            ) : (
              <StaffRow key={row.n} row={row} />
            )
          )}
          <tr className="h-[30px]">
            <Gutter n={20} />
            <td colSpan={38} className={CELL} />
            <Outside />
          </tr>
          <tr className="h-[60px]">
            <Gutter n={21} />
            <td colSpan={38} className="p-0 pl-[2px] align-top text-left border-r border-black bg-[#a9d08e] font-bold whitespace-pre">
              <p className="text-[#ff0000] text-[10px] leading-4">Shift Remark （ KWEAP):</p>
              <p className="leading-[14px]">{SHIFT_TIMES.join('    ')}</p>
            </td>
            <Outside />
          </tr>
        </tbody>
      </table>
      {/* frozen pane edge */}
      <span className="absolute left-[558px] top-4 bottom-0 w-px bg-[#9b9b9b]" />
    </div>
    <div className="w-[21px] px-[3px] pt-[2px] pb-px flex flex-col shrink-0">
      <button type="button" aria-label="向上滚动" className="h-[15px] flex items-center justify-center bg-white border border-[#ababab]">
        <Caret className="text-[#666] rotate-180" />
      </button>
      <div className="flex-1 mt-px bg-[#dadada]">
        <div className="h-[83%] bg-white border border-[#ababab]" />
      </div>
      <button type="button" aria-label="向下滚动" className="h-[15px] flex items-center justify-center bg-white border border-[#ababab]">
        <Caret />
      </button>
    </div>
  </main>
);

/* ---------- sheet tabs and status bar ---------- */

const SheetTabs = () => (
  <div className="h-[28px] bg-[#e6e6e6] border-t border-[#9b9b9b] flex items-start shrink-0 text-[#444]">
    <div className="w-[100px] h-[26px] flex items-center gap-[24px] pl-[26px] shrink-0">
      <button type="button" aria-label="上一张工作表"><svg width="5" height="8" viewBox="0 0 5 8"><path d="M5 0v8L0 4z" fill="#bbb" /></svg></button>
      <button type="button" aria-label="下一张工作表"><svg width="5" height="8" viewBox="0 0 5 8"><path d="M0 0v8l5-4z" fill="#bbb" /></svg></button>
    </div>
    <button type="button" className="-mt-px w-[46px] h-[25px] bg-white border-x border-x-[#9b9b9b] border-b-2 border-b-[#217346] text-[#217346] text-[14px] leading-[22px]">1月</button>
    <button type="button" className="w-[44px] h-[24px] text-[14px] leading-[22px] border-r border-[#ababab]">2月</button>
    <button type="button" aria-label="新工作表" className="ml-[33px] mt-[5px]">
      <svg width="17" height="17" viewBox="0 0 17 17" fill="none" stroke="#777">
        <circle cx="8.500" cy="8.500" r="7.800" />
        <path d="M8.500 4.500v8M4.500 8.500h8" strokeWidth="2" />
      </svg>
    </button>
    <div className="ml-auto w-[747px] h-[15px] mt-[7px] mr-[21px] flex items-center">
      <svg width="2" height="11" viewBox="0 0 2 11" fill="#aaa" className="mr-[15px] shrink-0"><path d="M0 0h2v2H0zM0 4h2v2H0zM0 8h2v2H0z" /></svg>
      <button type="button" aria-label="向左滚动" className="w-[14px] h-full shrink-0 flex items-center justify-center bg-white border border-[#ababab]">
        <svg width="4" height="7" viewBox="0 0 4 7"><path d="M4 0v7L0 3.500z" fill="#666" /></svg>
      </button>
      <div className="flex-1 h-full bg-[#dadada] mr-px">
        <div className="w-[94%] h-full bg-white border border-[#ababab]" />
      </div>
      <button type="button" aria-label="向右滚动" className="w-[14px] h-full shrink-0 flex items-center justify-center bg-white border border-[#ababab]">
        <svg width="4" height="7" viewBox="0 0 4 7"><path d="M0 0v7l4-3.500z" fill="#666" /></svg>
      </button>
    </div>
  </div>
);

const StatusBar = () => (
  <div className="h-[23px] bg-[#f3f3f3] border-t border-t-[#c6c6c6] border-b border-b-[#a5bdb2] flex items-center pl-[6px] pr-2 text-xs text-[#333] shrink-0">
    <span className="pb-[2px]">选定目标区域，然后按 ENTER 或选择“粘贴”</span>
    <div className="ml-auto flex items-center h-full">
      <button type="button" aria-label="普通视图" className="w-[38px] h-full flex items-center justify-center bg-[#c5c5c5]">
        <svg width="13" height="13" viewBox="0 0 13 13" fill="none" stroke="#666"><path d="M.5.500h12v12H.5zM.5 4.500h12M.5 8.500h12M4.500.500v12M8.500.500v12" /></svg>
      </button>
      <button type="button" aria-label="页面布局" className="w-[38px] flex justify-center">
        <svg width="14" height="13" viewBox="0 0 14 13" fill="none" stroke="#666"><path d="M.5.500h13v12H.5zM3.500 2.500h7v8h-7zM5 4.500h4M5 6.500h4M5 8.500h4" /></svg>
      </button>
      <button type="button" aria-label="分页预览" className="w-[38px] flex justify-center">
        <svg width="14" height="13" viewBox="0 0 14 13" fill="none" stroke="#666"><path d="M.5.500h13v12H.5zM.5 7.500h8v-7M4.500.500v7" /></svg>
      </button>
      <button type="button" aria-label="缩小" className="w-[15px] flex justify-center"><span className="w-[6px] h-[2px] bg-[#555]" /></button>
      <input
        type="range"
        aria-label="缩放比例"
        min="0"
        max="100"
        defaultValue="39"
        className="w-[100px] h-3 appearance-none bg-[linear-gradient(#aaa,#aaa)] bg-[length:100%_1px] bg-center bg-no-repeat [&::-webkit-slider-thumb]:appearance-none [&::-webkit-slider-thumb]:w-[5px] [&::-webkit-slider-thumb]:h-[11px] [&::-webkit-slider-thumb]:bg-[#666]"
      />
      <button type="button" aria-label="放大" className="w-[15px] flex justify-center">
        <svg width="7" height="7" viewBox="0 0 7 7" stroke="#555" strokeWidth="2"><path d="M3.500 0v7M0 3.500h7" /></svg>
      </button>
      <span className="w-[33px] text-right">80%</span>
    </div>
  </div>
);

/* ---------- taskbar ---------- */

const TASK_ICONS = [
  {
    name: '任务视图',
    art: (
      <>
        <path d="M0 6h18v17H0z" fill="#333" />
        <path d="M6 1h18v16H6z" fill="#fff" fillOpacity=".9" />
        <path d="M6 6h12v11H6z" fill="#aaa" />
      </>
    ),
  },
  {
    name: '文件资源管理器',
    running: true,
    art: (
      <>
        <path d="M0 1h9l2 3h-1v4H0z" fill="#d9930d" />
        <path d="M0 5h24v16a2 2 0 0 1-2 2H2a2 2 0 0 1-2-2z" fill="#ffcb45" />
        <path d="M5 23v-5a2 2 0 0 1 2-2h10a2 2 0 0 1 2 2v5z" fill="#1579c4" />
        <path d="M8 19h8v1H8z" fill="#0c5a96" />
      </>
    ),
  },
  {
    name: 'Edge',
    running: true,
    art: (
      <>
        <circle cx="12" cy="12" r="12" fill="#1b8fd6" />
        <path d="M0 11C1 4 6 0 12 0c7 0 12 5 12 10 0 4-3 6-6 6-2 0-3-1-3-2 1-5-4-7-8-6-3 0-6 1-7 3z" fill="#3cc8b4" />
        <path d="M17 1c5 2 7 6 7 9 0 4-3 6-6 6-2 0-3-1-3-2 3-4 3-8 2-13z" fill="#62d65a" />
        <path d="M10 11c-3 5 1 12 9 10-6 5-15 2-17-4-1-5 3-9 7-8 2 0 2 1 1 2z" fill="#0d5aa7" />
        <path d="M11 10c3 0 4 2 3 4 0 3 5 4 8 2-1 3-4 4-7 3-4-1-6-5-4-9z" fill="#d6f0ea" />
      </>
    ),
  },
  {
    name: 'Microsoft Store',
    art: (
      <>
        <path d="M7 6V2h10v4" fill="none" stroke="#2bb5f0" strokeWidth="2" />
        <path d="M1 5h22v16a2 2 0 0 1-2 2H3a2 2 0 0 1-2-2z" fill="#14477c" />
        <path d="M7 10h4v4H7z" fill="#f25022" /><path d="M12 10h4v4h-4z" fill="#7fba00" />
        <path d="M7 15h4v4H7z" fill="#00a4ef" /><path d="M12 15h4v4h-4z" fill="#ffb900" />
      </>
    ),
  },
  {
    name: '计算器',
    running: true,
    art: (
      <>
        <path d="M3 0h18v24H3z" fill="#6d747a" />
        <path d="M5 2h14v5H5z" fill="#3cc1f0" />
        <path d="M5 9h4v4H5zM10 9h4v4h-4zM15 9h4v4h-4zM5 14h4v4H5zM10 14h4v4h-4zM5 19h4v3H5zM10 19h4v3h-4z" fill="#dfe4e8" />
        <path d="M15 14h4v8h-4z" fill="#12508f" />
      </>
    ),
  },
  {
    name: '微信',
    running: true,
    art: (
      <>
        <ellipse cx="9" cy="10" rx="9" ry="8" fill="#1fd566" />
        <path d="M3 15l-1 5 5-3z" fill="#1fd566" />
        <circle cx="6" cy="7.500" r="1.200" fill="#0b6b35" /><circle cx="12" cy="7.500" r="1.200" fill="#0b6b35" />
        <ellipse cx="17" cy="15" rx="7" ry="6.500" fill="#e8e8e8" />
        <circle cx="15" cy="13.500" r="1" fill="#777" /><circle cx="19.500" cy="13.500" r="1" fill="#777" />
      </>
    ),
  },
  {
    name: 'Chrome',
    running: true,
    art: (
      <>
        <circle cx="12" cy="12" r="12" fill="#fbc116" />
        <path d="M1.600 6l5.200 9L12 6h10.400A12 12 0 0 0 1.600 6z" fill="#e33b2e" />
        <path d="M1.600 6l5.200 9h5.200v3l-1.500 6A12 12 0 0 1 1.600 6z" fill="#249c48" />
        <circle cx="12" cy="12" r="6" fill="#fff" /><circle cx="12" cy="12" r="4.700" fill="#2f7de1" />
      </>
    ),
  },
  {
    name: '账务',
    running: true,
    art: (
      <>
        <rect width="24" height="24" rx="1" fill="#2d5bff" />
        <path d="M7 3.500l5 5 5-5M6 9.500h12M6 14.500h12M12 9v12" fill="none" stroke="#fff" strokeWidth="2" />
      </>
    ),
  },
  {
    name: 'Excel',
    active: true,
    art: (
      <>
        <path d="M11 3.500h12.500v17H11z" fill="#fff" stroke="#217346" />
        <path d="M14 6h3v2h-3zM18 6h4v2h-4zM14 9h3v2h-3zM18 9h4v2h-4zM14 12h3v2h-3zM18 12h4v2h-4zM14 15h3v2h-3zM18 15h4v2h-4z" fill="#217346" />
        <path d="M0 2.500L14 0v24L0 21.500z" fill="#217346" />
        <path d="M4 8l5 8M9 8l-5 8" stroke="#fff" strokeWidth="1.800" />
      </>
    ),
  },
];

const Taskbar = () => (
  <footer className="h-[48px] bg-[#c8ecdf] flex items-center shrink-0 text-xs text-[#222]">
    <div className="flex-1 flex items-center gap-[7px] pl-[19px]">
      <svg width="24" height="17" viewBox="0 0 24 17" className="-mt-1">
        <path d="M6 17a6 6 0 0 1 0-11 7 7 0 0 1 12-1 6 6 0 0 1 1 12z" fill="#8fb4ee" />
        <path d="M6 6a7 7 0 0 1 12-1c-4 0-6 3-8 3S7 6 6 6z" fill="#bcd3f7" />
      </svg>
      <div className="leading-4">
        <p>12°C</p>
        <p className="text-[#555]">阴</p>
      </div>
    </div>
    <div className="flex items-center">
      <button type="button" aria-label="开始" className="w-[44px] flex justify-center mr-1">
        <svg width="23" height="23" viewBox="0 0 23 23">
          <path d="M0 0h11v11H0z" fill="#3fc1f5" /><path d="M12 0h11v11H12z" fill="#27a5e6" />
          <path d="M0 12h11v11H0z" fill="#1c94dc" /><path d="M12 12h11v11H12z" fill="#0a7bd0" />
        </svg>
      </button>
      <label className="w-[218px] h-[31px] mr-[3px] rounded-full bg-[#edf8f3] border border-[#b5d9cb] flex items-center pl-[10px] pr-1">
        <svg width="15" height="15" viewBox="0 0 15 15" fill="none" stroke="#222" strokeWidth="1.600">
          <circle cx="6.500" cy="6.500" r="5.500" /><path d="M10.500 10.500l4 4" />
        </svg>
        <input type="search" aria-label="搜索" placeholder="搜索" className="w-0 flex-1 ml-[10px] text-[14px] bg-transparent outline-none placeholder:text-[#555]" />
        <svg width="46" height="22" viewBox="0 0 46 22">
          <path d="M1 12C0 6 5 0 12 1c5 0 8 1 9 3-3 5-9 8-14 11-3 1-5 0-6-3z" fill="#e9b872" />
          <path d="M5 9c1-5 6-8 12-6 0 5-6 9-10 9z" fill="#f4d09b" />
          <path d="M4 7c2 1 4 3 4 6M8 13l7 7M12 10l8 9M15 20l5-3" stroke="#e0526b" strokeWidth="2" fill="none" />
          <ellipse cx="35" cy="17" rx="11" ry="4" fill="#6b5aa5" />
          <path d="M28 2h15l-2 14c-3 1-8 1-11 0z" fill="#4c3c72" />
          <ellipse cx="35.500" cy="2.500" rx="7.500" ry="2" fill="#7462ac" />
          <path d="M29.500 12c4 1.500 8 1.500 12 0l-.5 3c-3 1.500-8 1.500-11 0z" fill="#9c8fd0" />
        </svg>
      </label>
      {TASK_ICONS.map(({ name, art, running, active }) => (
        <button key={name} type="button" aria-label={name} className="relative w-[44px] h-[48px] flex items-center justify-center">
          {active && <span className="absolute inset-x-[3px] inset-y-[5px] rounded bg-[#e6f6f0]" />}
          <svg width="24" height="24" viewBox="0 0 24 24" className="relative">{art}</svg>
          {running && <span className="absolute bottom-[6px] w-[6px] h-[3px] rounded-full bg-[#6f8a80]" />}
          {active && <span className="absolute bottom-[6px] w-4 h-[3px] rounded-full bg-[#0078d4]" />}
        </button>
      ))}
    </div>
    <div className="flex-1 flex items-center justify-end pr-[19px]">
      <button type="button" aria-label="显示隐藏的图标" className="mr-[18px]">
        <svg width="10" height="7" viewBox="0 0 10 7" fill="none" stroke="#222" strokeWidth="1.600"><path d="M.5 6L5 1.500 9.500 6" /></svg>
      </button>
      <button type="button" aria-label="同步" className="mr-4">
        <svg width="17" height="17" viewBox="0 0 17 17" fill="none" stroke="#222" strokeWidth="1.300">
          <path d="M1 9a7 7 0 0 1 13-4M14.500 1v4.500H10M6 12H1.500v4.500M1.500 12c1.500 2 3 3.500 5 4" />
          <circle cx="12.500" cy="12.500" r="4" fill="#0078d4" stroke="none" />
        </svg>
      </button>
      <button type="button" className="text-[15px] mr-[23px]">中</button>
      <button type="button" className="text-[15px] mr-[23px]">拼</button>
      <button type="button" aria-label="网络" className="mr-2">
        <svg width="16" height="17" viewBox="0 0 16 17" fill="none" stroke="#222">
          <path d="M10 1.500H2a1 1 0 0 0-1 1v9a1 1 0 0 0 1 1h10.500V8M4 15.500h7M5.500 13v2.500M9 13v2.500M11.500.500h4v5h-4zM13.500 6v5" />
        </svg>
      </button>
      <button type="button" aria-label="音量" className="mr-[13px]">
        <svg width="17" height="15" viewBox="0 0 17 15" fill="none" stroke="#222">
          <path d="M.5 5h3l4-3.500v12L3.500 10h-3zM10 5c1.200 1.500 1.200 3.500 0 5M12 3c2.200 2.500 2.200 6.500 0 9M14 1c3.200 3.500 3.200 9.500 0 13" />
        </svg>
      </button>
      <time className="text-right leading-4">15:10<br />2025/12/16</time>
    </div>
  </footer>
);

const App = () => (
  <div className="h-screen flex flex-col overflow-hidden font-['Open_Sans','Noto_Sans_CJK_SC',sans-serif]">
    <TitleBar />
    <TabBar />
    <Ribbon />
    <FormulaBar />
    <Worksheet />
    <SheetTabs />
    <StatusBar />
    <Taskbar />
  </div>
);

export default App;
